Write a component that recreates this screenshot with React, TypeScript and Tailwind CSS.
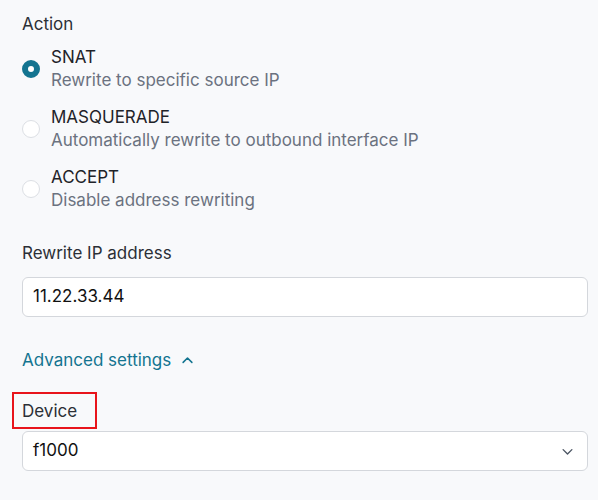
import { useState } from "react";

const options = [
  { value: "snat", label: "SNAT", desc: "Rewrite to specific source IP" },
  { value: "masquerade", label: "MASQUERADE", desc: "Automatically rewrite to outbound interface IP" },
  { value: "accept", label: "ACCEPT", desc: "Disable address rewriting" },
];

export default function App() {
  const [action, setAction] = useState("snat");

  return (
    <div
      className="min-h-[500px] w-[598px] bg-[#f8f9fb] pl-[22px] pr-[10px] pt-[12px] text-[17px] text-[#2b2f36]"
      style={{ fontFamily: "Inter, 'Noto Sans', sans-serif" }}
    >
      <div className="leading-[24px]">Action</div>

      <div className="mt-[10px] flex flex-col gap-[14px]">
        {options.map((o) => (
          <label key={o.value} className="flex cursor-pointer items-center gap-[11px]">
            <span
              className={
                action === o.value
                  ? "h-[18px] w-[18px] shrink-0 rounded-full border-[6px] border-[#137490] bg-white"
                  : "h-[18px] w-[18px] shrink-0 rounded-full border border-[#dcdfe4] bg-white"
              }
              onClick={() => setAction(o.value)}
            />
            <span className="flex flex-col">
              <span className="leading-[23px] text-[#1f2329]">{o.label}</span>
              <span className="leading-[23px] text-[#6b7280]">{o.desc}</span>
            </span>
          </label>
        ))}
      </div>

      <div className="mt-[29px] leading-[24px]">Rewrite IP address</div>
      <div className="mt-[12px] flex h-[40px] items-center rounded-[6px] border border-[#d4d7dc] bg-white px-[10px] text-[#111]">
        11.22.33.44
      </div>

      <div className="mt-[31px] flex items-center gap-[9px] leading-[24px] text-[#137490]">
        <span>Advanced settings</span>
        <svg width="15" height="15" viewBox="0 0 24 24" fill="none" stroke="currentColor" strokeWidth="2.5" strokeLinecap="round" strokeLinejoin="round">
          <path d="M5 15l7-7 7 7" />
        </svg>
      </div>

      <div className="mt-[20px] ml-[-10px] inline-flex h-[37px] items-center border-2 border-[#e8141b] pl-[8px] pr-[18px] leading-[24px]">
        Device
      </div>
      <div className="mt-[2px] flex h-[40px] items-center justify-between rounded-[6px] border border-[#d4d7dc] bg-white pl-[10px] pr-[12px] text-[#111]">
        <span>f1000</span>
        <svg width="15" height="15" viewBox="0 0 24 24" fill="none" stroke="#4b5563" strokeWidth="2.2" strokeLinecap="round" strokeLinejoin="round">
          <path d="M5 9l7 7 7-7" />
        </svg>
      </div>
    </div>
  );
}
